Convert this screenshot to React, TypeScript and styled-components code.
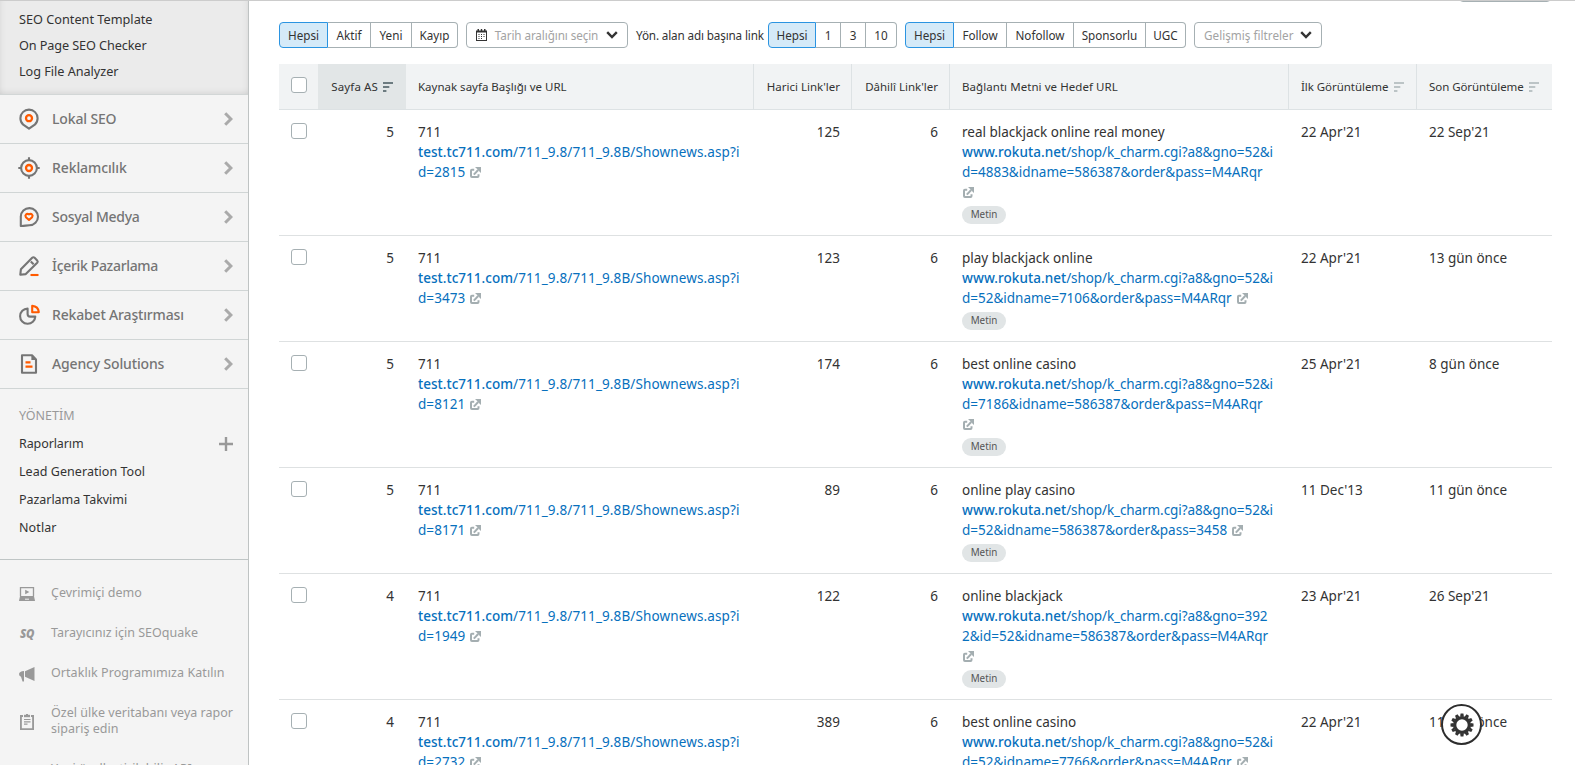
import React from 'react';
import styled, { createGlobalStyle, css } from 'styled-components';

const GlobalStyle = createGlobalStyle`
  *, *::before, *::after { box-sizing: border-box; }
  html, body { margin: 0; padding: 0; background: #fff; overflow: hidden; }
  body {
    font-family: "Noto Sans", "Open Sans", sans-serif;
    font-size: 13.5px;
    line-height: 20px;
    color: #333;
  }
  svg { display: block; flex: none; }
`;

/* ---------- page ---------- */

const Page = styled.div`
  display: flex;
  height: 765px;
  overflow: hidden;
  border-top: 1px solid #ccc;
`;

const Main = styled.main`
  flex: 1;
  min-width: 0;
  padding: 0 23px 0 30px;
`;

const ActionsStrip = styled.div`
  display: flex;
  justify-content: flex-end;
  align-items: flex-end;
  height: 1px;
  padding-right: 1px;
`;

const CutButton = styled.div`
  width: 92px;
  height: 6px;
  border: 1px solid #a6b0b3;
  border-radius: 0 0 4px 4px;
`;

/* ---------- sidebar ---------- */

const Sidebar = styled.aside`
  width: 249px;
  flex: none;
  background: #f4f4f4;
  border-right: 1px solid #bfc3c3;
  overflow: hidden;
`;

const SubMenu = styled.div`
  height: 94px;
  padding: 5px 19px 0;
  background: #ebebeb;
  border-bottom: 1px solid #d2d6d6;
  box-shadow: inset 0 -5px 6px -4px rgba(0, 0, 0, 0.1), inset 6px 0 6px -5px rgba(0, 0, 0, 0.06),
    inset -6px 0 6px -5px rgba(0, 0, 0, 0.06);
`;

const SubMenuLink = styled.a<{ $ls: number }>`
  display: block;
  font-size: 12.7px;
  line-height: 26px;
  letter-spacing: ${(p) => p.$ls}px;
`;

const NavItem = styled.a`
  display: flex;
  align-items: center;
  height: 49px;
  padding: 0 15px 0 18px;
  border-bottom: 1px solid #d0d5d5;
`;

const NavLabel = styled.span<{ $ls: number }>`
  flex: 1;
  margin-left: 12px;
  font-size: 14px;
  font-weight: 500;
  letter-spacing: ${(p) => p.$ls}px;
  color: #757575;
`;

const Management = styled.section`
  height: 171px;
  padding: 13px 15px 0 19px;
  border-bottom: 1px solid #bfc5c5;
`;

const ManagementTitle = styled.div`
  height: 28px;
  font-size: 12.5px;
  line-height: 27px;
  color: #999;
`;

const ManagementLink = styled.a<{ $ls?: number }>`
  display: flex;
  justify-content: space-between;
  align-items: center;
  height: 28px;
  font-size: 12.5px;
  letter-spacing: ${(p) => p.$ls ?? 0}px;
`;

const Extras = styled.section`
  display: flex;
  flex-direction: column;
  gap: 24px;
  padding: 25px 10px 0 19px;
`;

const ExtraLink = styled.a<{ $ls?: number }>`
  display: flex;
  align-items: center;
  gap: 16px;
  font-size: 12.5px;
  line-height: 16px;
  letter-spacing: ${(p) => p.$ls ?? 0}px;
  white-space: nowrap;
  color: #999;
`;

const ExtraIcon = styled.span`
  display: flex;
  width: 16px;
  height: 12px;
  padding-top: 2px;
  align-items: center;
  justify-content: center;
`;

const SeoQuakeMark = styled.b`
  font-size: 11.5px;
  font-weight: 900;
  font-style: italic;
  letter-spacing: -0.3px;
`;

/* ---------- toolbar ---------- */

const Toolbar = styled.div`
  display: flex;
  align-items: center;
  gap: 8px;
  height: 26px;
  margin-top: 20px;
  font-size: 11.7px;
  white-space: nowrap;
`;

const Segments = styled.div`
  display: flex;
  height: 26px;
`;

const Segment = styled.button<{ $width: number; $active?: boolean }>`
  width: ${(p) => p.$width}px;
  padding: 0 0 1px;
  border: solid #a6b0b3;
  border-width: 1px 1px 1px 0;
  background: #fff;
  color: #333;
  font: inherit;
  &:last-child { border-radius: 0 4px 4px 0; }
  ${(p) =>
    p.$active &&
    css`
      border: 1px solid #2b94e1;
      border-radius: 4px 0 0 4px;
      background: #d5eaf8;
    `}
`;

const SelectBox = styled.button<{ $width: number; $ls: number }>`
  display: flex;
  align-items: center;
  justify-content: space-between;
  width: ${(p) => p.$width}px;
  height: 26px;
  padding: 0 9px 1px;
  border: 1px solid #a6b0b3;
  border-radius: 4px;
  background: #fff;
  color: #a3a3a3;
  font: inherit;
  letter-spacing: ${(p) => p.$ls}px;
`;

const LabeledFilter = styled.div`
  display: flex;
  align-items: center;
`;

const FilterLabel = styled.span`
  width: 132px;
  padding-bottom: 1px;
  letter-spacing: -0.14px;
`;

/* ---------- table ---------- */

const Table = styled.div`
  margin-top: 16px;
`;

const Row = styled.div`
  display: grid;
  grid-template-columns: 39px 88px 348px 98px 98px 339px 128px 135px;
  border-bottom: 1px solid #dee1e2;
`;

const HeadRow = styled(Row)`
  height: 46px;
  background: #f1f3f4;
  border-bottom-color: #dde2e4;
`;

const HeadCell = styled.div<{ $end?: boolean; $sorted?: boolean; $ls?: number }>`
  display: flex;
  align-items: center;
  justify-content: ${(p) => (p.$end ? 'flex-end' : 'flex-start')};
  gap: 5px;
  padding: 0 ${(p) => (p.$sorted ? 13 : 11)}px 0 12px;
  border-right: ${(p) => (p.$sorted ? '0' : '1px solid #dde2e4')};
  background: ${(p) => (p.$sorted ? '#e2e6e7' : 'transparent')};
  font-size: 11.5px;
  letter-spacing: ${(p) => p.$ls ?? 0}px;
  white-space: nowrap;
  &:last-child { border-right: 0; padding-right: 0; }
`;

const Cell = styled.div<{ $end?: boolean }>`
  padding: 12px 12px 11px;
  text-align: ${(p) => (p.$end ? 'right' : 'left')};
  white-space: nowrap;
`;

const CheckCell = styled.div`
  padding: 13px 0 0 12px;
`;

const Checkbox = styled.span`
  display: block;
  width: 16px;
  height: 16px;
  border: 1px solid #a6b0b3;
  border-radius: 3px;
  background: #fff;
`;

const UrlLine = styled.div`
  display: flex;
  align-items: center;
  height: 20px;
  color: #0770bd;
`;

const Domain = styled.b<{ $ls: number }>`
  font-weight: 550;
  letter-spacing: ${(p) => p.$ls}px;
`;

const Path = styled.span<{ $ls?: number }>`
  letter-spacing: ${(p) => p.$ls ?? 0}px;
`;

const IconGap = styled.span<{ $start?: boolean }>`
  margin: 1px 0 0 ${(p) => (p.$start ? 1 : 5)}px;
`;

const Tag = styled.span`
  display: flex;
  align-items: center;
  justify-content: center;
  width: 44px;
  height: 18px;
  margin-top: 4px;
  border-radius: 9px;
  background: #e1e5e6;
  color: #555;
  font-size: 9.9px;
  line-height: 17px;
  padding-bottom: 1px;
`;

const SettingsButton = styled.button`
  position: fixed;
  left: 1441px;
  top: 704px;
  display: flex;
  align-items: center;
  justify-content: center;
  width: 41px;
  height: 41px;
  padding: 0;
  border: 2px solid #2d2d2d;
  border-radius: 50%;
  background: #fff;
`;

/* ---------- icons ---------- */

const GREY = '#757575';
const ORANGE = '#ff5a00';

type NavIconName = 'pin' | 'target' | 'chat' | 'pencil' | 'pie' | 'doc';

const navShapes: Record<NavIconName, React.ReactNode> = {
  pin: (
    <>
      <path d="M11 20.7 L5.2 16.6 C3.2 14.9 2.4 12.7 2.4 10.2 A8.6 8.6 0 0 1 19.6 10.2 C19.6 12.7 18.8 14.9 16.8 16.6 Z" stroke={GREY} />
      <circle cx="11" cy="10.2" r="3" stroke={ORANGE} strokeWidth="2.3" />
    </>
  ),
  target: (
    <>
      <circle cx="11" cy="11" r="7.9" stroke={GREY} />
      <path d="M11 0.3V4M11 18v3.7M0.3 11H4M18 11h3.7" stroke={GREY} />
      <circle cx="11" cy="11" r="3" stroke={ORANGE} strokeWidth="2.3" />
    </>
  ),
  chat: (
    <>
      <path d="M2.8 20 V10.6 A8.6 8.6 0 1 1 11.4 19.3 C8.5 19.3 6 20.2 2.8 20 Z" stroke={GREY} />
      <path d="M11 14 L7.900 11.2 C6.500 9 8.600 7 11 8.400 C13.400 7 15.500 9 14.100 11.2 Z" stroke={ORANGE} />
    </>
  ),
  pencil: (
    <>
      <path d="M2.3 19.7 L2.9 14.3 L14.2 2.8 Q15.4 1.7 16.6 2.8 L19.2 5.4 Q20.3 6.6 19.2 7.8 L7.8 19.1 Z M12.8 6.4 L15.6 9.2" stroke={GREY} />
      <path d="M12.5 20h8" stroke={ORANGE} />
    </>
  ),
  pie: (
    <>
      <path d="M9.6 4.6 A7.6 7.6 0 1 0 17.3 12.6 H12.2 Q9.6 12.6 9.6 10 Z" stroke={GREY} />
      <path d="M14.2 1.9 Q20.3 2.3 20.8 8.2 H14.2 Z" stroke={ORANGE} />
    </>
  ),
  doc: (
    <>
      <path d="M4 2.2 H14 L18 6.4 V19.8 H4 Z" stroke={GREY} />
      <path d="M13.4 2.4V7H18Z" fill={GREY} stroke="none" />
      <path d="M7.5 9.4h5M7.5 13.6h7" stroke={ORANGE} />
    </>
  ),
};

const NavIcon = ({ name }: { name: NavIconName }) => (
  <svg width="22" height="22" viewBox="0 0 22 22" fill="none" strokeWidth="2.1" strokeLinejoin="round">
    {navShapes[name]}
  </svg>
);

const ChevronRight = () => (
  <svg width="9" height="14" viewBox="0 0 9 14" fill="none" stroke="#aaa" strokeWidth="3">
    <path d="M1.2 1.2 L6.9 7 L1.2 12.8" />
  </svg>
);

const ChevronDown = () => (
  <svg width="12" height="8" viewBox="0 0 12 8" fill="none" stroke="#333" strokeWidth="2.4">
    <path d="M1.2 1.2 L6 6 L10.8 1.2" />
  </svg>
);

const PlusIcon = () => (
  <svg width="14" height="14" viewBox="0 0 14 14" fill="#999">
    <path d="M5.8 0h2.400v5.800H14v2.400H8.200V14H5.800V8.200H0V5.800h5.800z" />
  </svg>
);

const SortIcon = ({ color }: { color: string }) => (
  <svg width="10" height="10" viewBox="0 0 10 10" fill={color}>
    <path d="M0 0h10v2H0zM0 4h6.300v2H0zM0 8h3.400V10H0z" />
  </svg>
);

const CalendarIcon = () => (
  <svg width="11" height="12" viewBox="0 0 11 12" fill="#333">
    <path fillRule="evenodd" d="M0 1.5h1.5V0h1.500v1.500h1.800V0h1.400v1.500H8V0h1.500v1.500H11V12H0zM1 3.600V11h9V3.600z" />
    <path d="M2.500 5h1v1H2.500zM5 5h1v1H5zM7.500 5h1v1H7.500zM2.500 7h1v1H2.500zM5 7h1v1H5zM7.500 7h1v1H7.500zM2.500 9h1v1H2.500zM5 9h1v1H5z" />
  </svg>
);

const ExternalIcon = () => (
  <svg width="11" height="11" viewBox="0 0 11 11" fill="none" stroke="#a4aeb1">
    <path d="M4.2 2.800H1.900Q1 2.800 1 3.700V9.100Q1 10 1.900 10H7.600Q8.500 10 8.500 9.100V7.200" strokeWidth="2" />
    <path d="M3.800 7.600 L8.200 3" strokeWidth="2" />
    <path d="M5 0h6v6L8.900 3.900 7.100 2z" fill="#a4aeb1" stroke="none" />
  </svg>
);

const DemoIcon = () => (
  <svg width="16" height="14" viewBox="0 0 16 14">
    <path d="M1.5 9V.7h13V9" fill="none" stroke="#999" strokeWidth="1.3" />
    <path d="M6.200 2.800 10.400 5 6.200 7.200z" fill="#999" />
    <path d="M1 9h14l1 5H0z" fill="#999" />
    <path d="M6 12.200h4" stroke="#f4f4f4" strokeWidth="1" />
  </svg>
);

const MegaphoneIcon = () => (
  <svg width="16" height="16" viewBox="0 0 16 16" fill="#999">
    <path d="M15.500 1v14L6 10.800V5.200z" />
    <path d="M5 5v10.500H3.500L2 10.800Q0 10 0 8 .4 5.400 5 5z" />
  </svg>
);

const ClipboardIcon = () => (
  <svg width="14" height="16" viewBox="0 0 14 16" fill="none" stroke="#999">
    <path d="M3 2H.9V15.100H13.100V2H11" strokeWidth="1.900" />
    <path d="M4 2h6" strokeWidth="2.400" />
    <path d="M7 0v2" strokeWidth="2" />
    <path d="M4 5.500h6.500M4 7.800h6.500M4 10.100h3.500" strokeWidth="1.200" />
  </svg>
);

const GearIcon = () => (
  <svg width="24" height="24" viewBox="-12 -12 24 24">
    <circle r="7.400" fill="none" stroke="#333" strokeWidth="3.400" />
    {Array.from({ length: 12 }, (_, i) => (
      <path key={i} d="M-1.900 -8.500 L-1.400 -11.500 H1.400 L1.900 -8.500Z" fill="#333" transform={`rotate(${i * 30})`} />
    ))}
  </svg>
);

/* ---------- data ---------- */

const subMenu = [
  { label: 'SEO Content Template', ls: 0.01 },
  { label: 'On Page SEO Checker', ls: -0.11 },
  { label: 'Log File Analyzer', ls: -0.04 },
];

const nav: { icon: NavIconName; label: string; ls: number }[] = [
  { icon: 'pin', label: 'Lokal SEO', ls: -0.15 },
  { icon: 'target', label: 'Reklamcılık', ls: -0.1 },
  { icon: 'chat', label: 'Sosyal Medya', ls: -0.28 },
  { icon: 'pencil', label: 'İçerik Pazarlama', ls: -0.33 },
  { icon: 'pie', label: 'Rekabet Araştırması', ls: -0.17 },
  { icon: 'doc', label: 'Agency Solutions', ls: -0.15 },
];

const management = [
  { label: 'Raporlarım', ls: -0.1, add: true },
  { label: 'Lead Generation Tool', ls: 0.05 },
  { label: 'Pazarlama Takvimi', ls: -0.05 },
  { label: 'Notlar', ls: 0.1 },
];

interface LinkRow {
  score: number;
  sourceId: string;
  external: number;
  anchor: string;
  target: [string, string];
  wrapIcon?: boolean;
  first: string;
  last: string;
}

const PATH = '/shop/k_charm.cgi?a8&gno=';

const rows: LinkRow[] = [
  { score: 5, sourceId: '2815', external: 125, anchor: 'real blackjack online real money', target: ['52&i', 'd=4883&idname=586387&order&pass=M4ARqr'], wrapIcon: true, first: "22 Apr'21", last: "22 Sep'21" },
  { score: 5, sourceId: '3473', external: 123, anchor: 'play blackjack online', target: ['52&i', 'd=52&idname=7106&order&pass=M4ARqr'], first: "22 Apr'21", last: '13 gün önce' },
  { score: 5, sourceId: '8121', external: 174, anchor: 'best online casino', target: ['52&i', 'd=7186&idname=586387&order&pass=M4ARqr'], wrapIcon: true, first: "25 Apr'21", last: '8 gün önce' },
  { score: 5, sourceId: '8171', external: 89, anchor: 'online play casino', target: ['52&i', 'd=52&idname=586387&order&pass=3458'], first: "11 Dec'13", last: '11 gün önce' },
  { score: 4, sourceId: '1949', external: 122, anchor: 'online blackjack', target: ['392', '2&id=52&idname=586387&order&pass=M4ARqr'], wrapIcon: true, first: "23 Apr'21", last: "26 Sep'21" },
  { score: 4, sourceId: '2732', external: 389, anchor: 'best online casino', target: ['52&i', 'd=52&idname=7766&order&pass=M4ARqr'], first: "22 Apr'21", last: '11 gün önce' },
];

/* ---------- components ---------- */

const BacklinkRow = ({ row }: { row: LinkRow }) => (
  <Row>
    <CheckCell><Checkbox /></CheckCell>
    <Cell $end>{row.score}</Cell>
    <Cell>
      <div>711</div>
      <UrlLine>
        <Domain $ls={0.03}>test.tc711.com</Domain>
        <Path $ls={0.12}>/711_9.8/711_9.8B/Shownews.asp?i</Path>
      </UrlLine>
      <UrlLine>
        <Path $ls={0.05}>d={row.sourceId}</Path>
        <IconGap><ExternalIcon /></IconGap>
      </UrlLine>
    </Cell>
    <Cell $end>{row.external}</Cell>
    <Cell $end>6</Cell>
    <Cell>
      <div>{row.anchor}</div>
      <UrlLine>
        <Domain $ls={0.05}>www.rokuta.net</Domain>
        <Path $ls={-0.09}>{PATH + row.target[0]}</Path>
      </UrlLine>
      <UrlLine>
        <Path $ls={-0.01}>{row.target[1]}</Path>
        {!row.wrapIcon && <IconGap><ExternalIcon /></IconGap>}
      </UrlLine>
      {row.wrapIcon && <UrlLine><IconGap $start><ExternalIcon /></IconGap></UrlLine>}
      <Tag>Metin</Tag>
    </Cell>
    <Cell>{row.first}</Cell>
    <Cell>{row.last}</Cell>
  </Row>
);

export default function App() {
  return (
    <>
      <GlobalStyle />
      <Page>
        <Sidebar>
          <SubMenu>
            {subMenu.map((s) => <SubMenuLink key={s.label} $ls={s.ls}>{s.label}</SubMenuLink>)}
          </SubMenu>
          {nav.map((n) => (
            <NavItem key={n.label}>
              <NavIcon name={n.icon} />
              <NavLabel $ls={n.ls}>{n.label}</NavLabel>
              <ChevronRight />
            </NavItem>
          ))}
          <Management>
            <ManagementTitle>YÖNETİM</ManagementTitle>
            {management.map((m) => (
              <ManagementLink key={m.label} $ls={m.ls}>{m.label}{m.add && <PlusIcon />}</ManagementLink>
            ))}
          </Management>
          <Extras>
            <ExtraLink><ExtraIcon><DemoIcon /></ExtraIcon>Çevrimiçi demo</ExtraLink>
            <ExtraLink><ExtraIcon><SeoQuakeMark>SQ</SeoQuakeMark></ExtraIcon>Tarayıcınız için SEOquake</ExtraLink>
            <ExtraLink $ls={0.06}><ExtraIcon><MegaphoneIcon /></ExtraIcon>Ortaklık Programımıza Katılın</ExtraLink>
            <ExtraLink $ls={0.02}><ExtraIcon><ClipboardIcon /></ExtraIcon><span>Özel ülke veritabanı veya rapor<br />sipariş edin</span></ExtraLink>
            <ExtraLink $ls={0.05}><ExtraIcon />Yeni özelleştirilebilir API</ExtraLink>
          </Extras>
        </Sidebar>
        <Main>
          <ActionsStrip><CutButton /></ActionsStrip>
          <Toolbar>
            <Segments>
              <Segment $width={49} $active>Hepsi</Segment>
              <Segment $width={43}>Aktif</Segment>
              <Segment $width={41}>Yeni</Segment>
              <Segment $width={46}>Kayıp</Segment>
            </Segments>
            <SelectBox $width={162} $ls={-0.1}>
              <CalendarIcon />Tarih aralığını seçin<ChevronDown />
            </SelectBox>
            <LabeledFilter>
              <FilterLabel>Yön. alan adı başına link</FilterLabel>
              <Segments>
                <Segment $width={48} $active>Hepsi</Segment>
                <Segment $width={25}>1</Segment>
                <Segment $width={25}>3</Segment>
                <Segment $width={31}>10</Segment>
              </Segments>
            </LabeledFilter>
            <Segments>
              <Segment $width={49} $active>Hepsi</Segment>
              <Segment $width={53}>Follow</Segment>
              <Segment $width={67}>Nofollow</Segment>
              <Segment $width={72}>Sponsorlu</Segment>
              <Segment $width={40}>UGC</Segment>
            </Segments>
            <SelectBox $width={128} $ls={0.02}>Gelişmiş filtreler<ChevronDown /></SelectBox>
          </Toolbar>
          <Table>
            <HeadRow>
              <CheckCell><Checkbox /></CheckCell>
              <HeadCell $sorted $end $ls={0.12}>Sayfa AS<SortIcon color="#6c7b80" /></HeadCell>
              <HeadCell>Kaynak sayfa Başlığı ve URL</HeadCell>
              <HeadCell $end>Harici Link'ler</HeadCell>
              <HeadCell $end>Dâhilî Link'ler</HeadCell>
              <HeadCell $ls={0.06}>Bağlantı Metni ve Hedef URL</HeadCell>
              <HeadCell $ls={-0.05}>İlk Görüntüleme<SortIcon color="#bcc4c6" /></HeadCell>
              <HeadCell $ls={-0.06}>Son Görüntüleme<SortIcon color="#bcc4c6" /></HeadCell>
            </HeadRow>
            {rows.map((r) => <BacklinkRow key={r.sourceId} row={r} />)}
          </Table>
        </Main>
      </Page>
      <SettingsButton><GearIcon /></SettingsButton>
    </>
  );
}
